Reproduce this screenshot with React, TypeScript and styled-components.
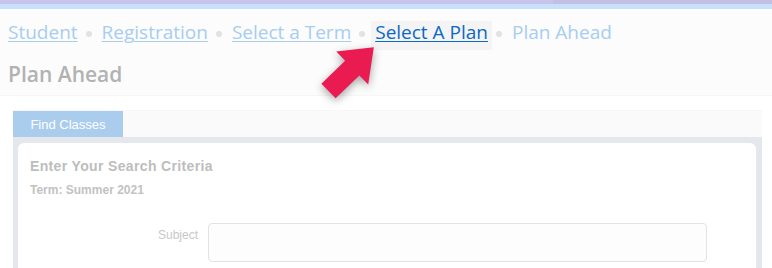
import { FC, Fragment } from 'react';
import styled, { createGlobalStyle } from 'styled-components';

const OPEN_SANS = `"Open Sans", "Liberation Sans", sans-serif`;
const ARIAL = `"Liberation Sans", Arial, sans-serif`;
const LINK_BLUE = '#a7cdf0';
const ACTIVE_BLUE = '#0b68c6';
const ARROW_RED = '#e91b50';

const GlobalStyle = createGlobalStyle`
  html, body {
    margin: 0;
    padding: 0;
    background: #ffffff;
  }
`;

const Page = styled.div`
  position: relative;
  width: 772px;
  height: 268px;
  overflow: hidden;
`;

const TopStripe = styled.div`
  height: 4px;
  background: linear-gradient(to right, #c6c4ec 0, #c6c4ec 553px, #c1c0e2 553px);
  border-bottom: 5px solid #c8e1fa;
`;

const Header = styled.header`
  margin-top: 2px;
  background: #fcfcfc;
  border-bottom: 1px solid #f6f6f6;
  padding: 10px 8px 0 8px;
  height: 74px;
`;

const Breadcrumbs = styled.nav`
  display: flex;
  align-items: center;
  height: 29px;
  font-family: ${OPEN_SANS};
  font-size: 19px;
`;

const Crumb = styled.a<{ $active?: boolean; $last?: boolean }>`
  color: ${({ $active }) => ($active ? ACTIVE_BLUE : LINK_BLUE)};
  text-decoration: ${({ $last }) => ($last ? 'none' : 'underline')};
  text-decoration-thickness: 1px;
  text-underline-offset: 2px;
  line-height: 23px;
  padding: ${({ $active }) => ($active ? '0 4px 6px' : '0 0 6px')};
  margin: ${({ $active }) => ($active ? '0 -4px' : '0')};
  background: ${({ $active }) => ($active ? '#f4f4f4' : 'transparent')};
`;

const Dot = styled.span`
  width: 6px;
  height: 6px;
  border-radius: 50%;
  background: #e2e2e2;
  margin: 0 10px 4px 8px;
`;

const Title = styled.h1`
  margin: 9px 0 0 0;
  font-family: ${OPEN_SANS};
  font-weight: 600;
  font-size: 21px;
  line-height: 30px;
  color: #b2b2b2;
`;

const Content = styled.main`
  padding: 14px 10px 0 13px;
`;

const TabBar = styled.div`
  display: flex;
  height: 26px;
  background: #fafafa;
  border-top: 1px solid #f6f6f6;
`;

const Tab = styled.div`
  width: 110px;
  background: #aacdee;
  color: #ffffff;
  font-family: ${ARIAL};
  font-size: 13px;
  padding-top: 2px;
  line-height: 24px;
  text-align: center;
`;

const Panel = styled.section`
  background: #e4e7ec;
  padding: 6px 6px 0 5px;
  height: 140px;
`;

const Card = styled.div`
  background: #ffffff;
  border-radius: 6px 6px 0 0;
  height: 100%;
  padding: 14px 12px 0 12px;
  font-family: ${ARIAL};
`;

const CardTitle = styled.h2`
  margin: 0;
  font-size: 14px;
  font-weight: bold;
  letter-spacing: 0.35px;
  line-height: 18px;
  color: #bdbdbd;
`;

const TermLine = styled.p`
  margin: 8px 0 0 0;
  font-size: 12px;
  font-weight: bold;
  line-height: 14px;
  color: #c2c2c2;
`;

const FieldRow = styled.div`
  display: flex;
  align-items: flex-start;
  margin-top: 26px;
`;

const FieldLabel = styled.label`
  width: 168px;
  text-align: right;
  padding-right: 10px;
  padding-top: 5px;
  font-size: 12px;
  color: #c8c8c8;
`;

const TextInput = styled.input`
  width: 499px;
  height: 39px;
  box-sizing: border-box;
  border: 1px solid #e3e3e3;
  border-radius: 4px;
  background: #fdfdfd;
  outline: none;
`;

const Pointer = styled.svg`
  position: absolute;
  left: 310px;
  top: 36px;
  filter: drop-shadow(0 3px 4px rgba(0, 0, 0, 0.35));
  pointer-events: none;
`;

const crumbs = ['Student', 'Registration', 'Select a Term', 'Select A Plan', 'Plan Ahead'];

const App: FC = () => {
  return (
    <Page>
      <GlobalStyle />
      <TopStripe />
      <Header>
        <Breadcrumbs>
          {crumbs.map((c, i) => (
            <Fragment key={c}>
              {i > 0 && <Dot />}
              <Crumb href="#" $active={i === 3} $last={i === crumbs.length - 1}>
                {c}
              </Crumb>
            </Fragment>
          ))}
        </Breadcrumbs>
        <Title>Plan Ahead</Title>
      </Header>
      <Content>
        <TabBar>
          <Tab>Find Classes</Tab>
        </TabBar>
        <Panel>
          <Card>
            <CardTitle>Enter Your Search Criteria</CardTitle>
            <TermLine>Term: Summer 2021</TermLine>
            <FieldRow>
              <FieldLabel>Subject</FieldLabel>
              <TextInput />
            </FieldRow>
          </Card>
        </Panel>
      </Content>
      <Pointer width="80" height="80" viewBox="0 0 80 80">
        <g transform="translate(18.5 55) rotate(-44)">
          <polygon
            points="0,-10.25 33,-10.25 33,-23 63,0 33,23 33,10.25 0,10.25"
            fill={ARROW_RED}
          />
        </g>
      </Pointer>
    </Page>
  );
};

export default App;
